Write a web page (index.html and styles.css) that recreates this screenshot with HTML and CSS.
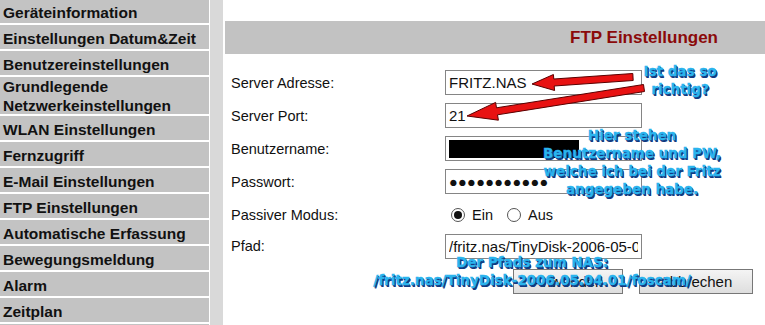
FILE: index.html
```html
<!DOCTYPE html>
<html lang="de">
<head>
    <meta charset="UTF-8">
    <meta name="viewport" content="width=device-width, initial-scale=1.0">
    <title>FTP Einstellungen</title>
    <link rel="stylesheet" href="styles.css">
</head>
<body>
    <div class="menu">
        <div class="menu-item">Geräteinformation</div>
        <div class="menu-item">Einstellungen Datum&amp;Zeit</div>
        <div class="menu-item">Benutzereinstellungen</div>
        <div class="menu-item double">Grundlegende Netzwerkeinstellungen</div>
        <div class="menu-item">WLAN Einstellungen</div>
        <div class="menu-item">Fernzugriff</div>
        <div class="menu-item">E-Mail Einstellungen</div>
        <div class="menu-item">FTP Einstellungen</div>
        <div class="menu-item">Automatische Erfassung</div>
        <div class="menu-item">Bewegungsmeldung</div>
        <div class="menu-item">Alarm</div>
        <div class="menu-item">Zeitplan</div>
    </div>
    <div class="strip"></div>

    <div class="main">
        <div class="title-bar">
            <h2>FTP Einstellungen</h2>
        </div>
        <div class="ftp-form">
            <div class="row">
                <label class="label">Server Adresse:</label>
                <input class="field" type="text" value="FRITZ.NAS">
            </div>
            <div class="row">
                <label class="label">Server Port:</label>
                <input class="field" type="text" value="21">
            </div>
            <div class="row">
                <label class="label">Benutzername:</label>
                <span class="field-wrap">
                    <input class="field" type="text" value="">
                    <span class="redact"></span>
                </span>
            </div>
            <div class="row">
                <label class="label">Passwort:</label>
                <input class="field dots" type="text" value="●●●●●●●●●●●">
            </div>
            <div class="row">
                <label class="label">Passiver Modus:</label>
                <label class="choice"><input type="radio" name="pasv" checked> Ein</label>
                <label class="choice"><input type="radio" name="pasv"> Aus</label>
            </div>
            <div class="row short">
                <label class="label">Pfad:</label>
                <input class="field" type="text" value="/fritz.nas/TinyDisk-2006-05-04-01/foscam/">
            </div>
            <div class="buttons">
                <button>Anwenden</button>
                <button>Abbrechen</button>
            </div>
        </div>
    </div>

    <!-- annotations drawn over the screenshot -->
    <svg class="arrows" width="765" height="325" viewBox="0 0 765 325">
        <polygon points="532,84 553.4,74.5 553.8,79 632.8,73.5 633.2,80.5 554.2,86 554.6,90.5" />
        <polygon points="467,116 495.6,102.4 496.5,107.8 643.5,84.5 644.5,91.5 497.5,114.8 498.4,120.2" />
    </svg>
    <div class="note note-port">Ist das so<br>richtig?</div>
    <div class="note note-login">Hier stehen<br>Benutzername und PW,<br>welche ich bei der Fritz<br>angegeben habe.</div>
    <div class="note note-path">Der Pfads zum NAS:<br>/fritz.nas/TinyDisk-2006.05.04.01/foscam/</div>
</body>
</html>
```

FILE: styles.css
```css
body {
    margin: 0;
    height: 100vh;
    overflow: hidden;
    display: flex;
    font-family: "Liberation Sans", Arial, sans-serif;
    background-color: white;
    position: relative;
}

.menu {
    width: 209px;
    margin-top: -1px;
    background-color: #c3c3c3;
    border-right: 1px solid white;
    flex-shrink: 0;
}

.menu-item {
    height: 20px;
    padding: 4px 0 0 3px;
    display: flex;
    align-items: center;
    font-size: 15.5px;
    font-weight: bold;
    line-height: 18.5px;
    color: #111;
    border-bottom: 2px solid white;
}

.menu-item.double {
    height: 35px;
    padding-top: 2px;
}

.strip {
    width: 13px;
    background-color: #d9d9d9;
    flex-shrink: 0;
}

.main {
    flex: 1;
}

.title-bar {
    margin: 21px 0 0 2px;
    height: 33px;
    background-color: #c2c2c2;
    display: flex;
    align-items: center;
    justify-content: flex-end;
    padding-right: 47px;
}

.title-bar h2 {
    margin: 0;
    font-size: 17px;
    color: #8b0a0a;
}

.ftp-form {
    margin-top: 12px;
    padding-left: 8px;
    font-size: 14.5px;
    color: #111;
}

.row {
    height: 33px;
    display: flex;
    align-items: center;
}

.row.short {
    height: 28px;
    padding-top: 2px;
    box-sizing: border-box;
}

.label {
    width: 214px;
}

.field {
    width: 197px;
    height: 25px;
    box-sizing: border-box;
    border: 1px solid #858585;
    padding: 0 3px;
    font-family: "Liberation Sans", Arial, sans-serif;
    font-size: 15px;
    color: #111;
    margin: 0;
    outline: none;
}

.field.dots {
    font-size: 14.5px;
    letter-spacing: 0.3px;
}

.field-wrap {
    position: relative;
    display: inline-block;
}

.redact {
    position: absolute;
    left: 4px;
    top: 4px;
    width: 130px;
    height: 18px;
    background-color: black;
}

.choice {
    display: flex;
    align-items: center;
    margin-right: 8px;
}

.choice input {
    appearance: none;
    width: 14px;
    height: 14px;
    margin: 0 7px 0 6px;
    border: 1px solid #555;
    border-radius: 50%;
    background-color: white;
    display: flex;
    align-items: center;
    justify-content: center;
}

.choice input:checked::after {
    content: "";
    width: 8px;
    height: 8px;
    border-radius: 50%;
    background-color: #111;
}

.buttons {
    margin: 10px 0 0 282px;
    display: flex;
    gap: 16px;
}

.buttons button {
    height: 25px;
    padding: 0;
    width: 110px;
    font-family: "Liberation Sans", Arial, sans-serif;
    font-size: 15px;
    color: #111;
    border: 1px solid #777;
    background: linear-gradient(#f4f4f4, #dedede);
}

.buttons button + button {
    width: 114px;
}

.arrows {
    position: absolute;
    left: 0;
    top: 0;
    pointer-events: none;
}

.arrows polygon {
    fill: #e81212;
    stroke: #5a0000;
    stroke-width: 1;
}

.note {
    position: absolute;
    text-align: center;
    font-family: "DejaVu Sans", Verdana, sans-serif;
    font-weight: bold;
    font-size: 13.5px;
    line-height: 18px;
    color: #2ab4ee;
    -webkit-text-stroke: 0.4px #2ab4ee;
    text-shadow: 1px 1px 0 #123a80, 1.5px 1.5px 0 #123a80;
    white-space: nowrap;
}

.note-port {
    left: 620px;
    top: 62px;
    width: 120px;
}

.note-login {
    left: 522px;
    top: 126px;
    width: 220px;
}

.note-path {
    left: 362px;
    top: 253px;
    width: 340px;
}
```
